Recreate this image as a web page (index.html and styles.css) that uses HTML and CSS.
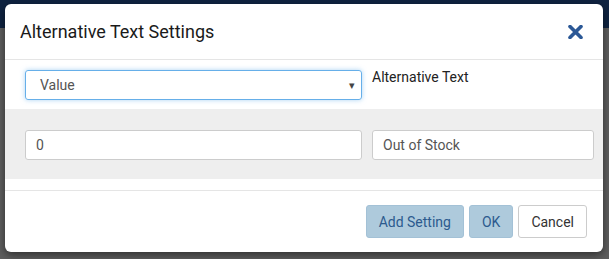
FILE: index.html
```html
<!DOCTYPE html>
<html lang="en">
<head>
    <meta charset="UTF-8">
    <meta name="viewport" content="width=device-width, initial-scale=1.0">
    <title>Alternative Text Settings</title>
    <link rel="stylesheet" href="styles.css">
</head>
<body>
    <div class="backdrop">
        <div class="modal">
            <div class="modal-header">
                <h4 class="modal-title">Alternative Text Settings</h4>
                <button class="close-btn" aria-label="Close">
                    <svg width="15" height="14" viewBox="0 0 15 14">
                        <path d="M2 1.5 L13 12.5 M13 1.5 L2 12.5" stroke="#2b5896" stroke-width="3.6" stroke-linecap="round"/>
                    </svg>
                </button>
            </div>
            <div class="modal-body">
                <div class="row head-row">
                    <div class="select-box">
                        <span>Value</span>
                        <span class="caret">&#9662;</span>
                    </div>
                    <label class="col-label">Alternative Text</label>
                </div>
                <div class="row setting-row">
                    <input type="text" class="text-input" value="0">
                    <input type="text" class="text-input" value="Out of Stock">
                </div>
            </div>
            <div class="modal-footer">
                <button class="btn btn-primary">Add Setting</button>
                <button class="btn btn-primary">OK</button>
                <button class="btn btn-default">Cancel</button>
            </div>
        </div>
    </div>
</body>
</html>
```

FILE: styles.css
```css
* {
    margin: 0;
    padding: 0;
    box-sizing: border-box;
}

body {
    font-family: Roboto, "Liberation Sans", Arial, sans-serif;
    background: #5c5c5c;
    height: 100vh;
    overflow: hidden;
}

.backdrop {
    height: 100%;
    padding: 4px 6px 0 5px;
    background:
        linear-gradient(#0f2341 0, #0f2341 28px, #5e5e5e 28px, #5e5e5e 100%);
}

.modal {
    width: 598px;
    height: 248px;
    background: #fff;
    border-radius: 6px;
    box-shadow: 0 3px 9px rgba(0, 0, 0, 0.5);
    display: flex;
    flex-direction: column;
    overflow: hidden;
}

.modal-header {
    height: 56px;
    padding: 0 20px 0 15px;
    border-bottom: 1px solid #e5e5e5;
    display: flex;
    align-items: center;
    justify-content: space-between;
}

.modal-title {
    font-size: 18px;
    font-weight: 400;
    color: #1a1a1a;
}

.close-btn {
    background: none;
    border: none;
    cursor: pointer;
    display: flex;
}

.modal-body {
    padding-top: 10px;
    height: 131px;
    border-bottom: 1px solid #e5e5e5;
}

.row {
    display: grid;
    grid-template-columns: 337px 222px;
    column-gap: 10px;
    padding: 0 10px 0 20px;
}

.head-row {
    height: 39px;
}

.select-box {
    height: 30px;
    border: 1px solid #66afe9;
    border-radius: 3px;
    box-shadow: 0 0 5px rgba(102, 175, 233, 0.55);
    display: flex;
    align-items: center;
    justify-content: space-between;
    padding: 0 6px 0 14px;
    font-size: 14px;
    color: #555;
}

.caret {
    font-size: 11px;
    color: #444;
}

.col-label {
    font-size: 14px;
    color: #222;
    line-height: 15px;
}

.setting-row {
    background: #eeeeee;
    padding-top: 21px;
    height: 70px;
}

.text-input {
    height: 30px;
    border: 1px solid #ccc;
    border-radius: 3px;
    padding: 0 10px;
    font-family: inherit;
    font-size: 14px;
    color: #555;
    background: #fff;
    outline: none;
}

.modal-footer {
    flex: 1;
    display: flex;
    justify-content: flex-end;
    gap: 5px;
    padding: 14px 16px 0 0;
}

.btn {
    height: 33px;
    padding: 0 12px;
    border-radius: 3px;
    font-family: inherit;
    font-size: 14px;
    cursor: pointer;
}

.btn-primary {
    background: #aecadc;
    border: 1px solid #a3c1d6;
    color: #2c5a8e;
}

.btn-default {
    background: #fff;
    border: 1px solid #ccc;
    color: #333;
}
```
